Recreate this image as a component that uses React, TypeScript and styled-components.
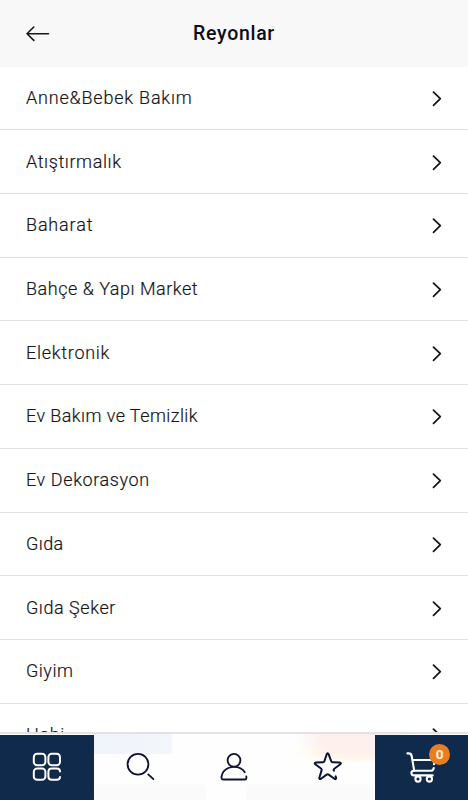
import React from "react";
import styled, { createGlobalStyle } from "styled-components";

const GlobalStyle = createGlobalStyle`
  * { box-sizing: border-box; }
  body { margin: 0; background: #fff; overflow: hidden; }
  svg { display: block; overflow: visible; }
`;

const Screen = styled.div`
  width: 468px;
  height: 800px;
  display: flex;
  flex-direction: column;
  overflow: hidden;
  background: #fff;
  font-family: Roboto, "Noto Sans", sans-serif;
  color: #17171b;
`;

const Header = styled.header`
  flex: none;
  height: 66.7px;
  padding: 1px 26px 0;
  display: grid;
  grid-template-columns: 24px 1fr 24px;
  align-items: center;
  background: #f8f8f8;
`;

const Title = styled.h1`
  margin: 0;
  text-align: center;
  font-size: 19.5px;
  line-height: 24px;
  font-weight: 500;
  letter-spacing: 0.7px;
  color: #0d0d18;
`;

const List = styled.ul`
  flex: 1;
  min-height: 0;
  margin: 0;
  padding: 0;
  list-style: none;
  overflow: hidden;
`;

const Row = styled.li`
  height: 63.7px;
  padding: 0 26px;
  display: flex;
  align-items: center;
  justify-content: space-between;
  border-bottom: 1px solid #e2e2e2;
`;

const Label = styled.span<{ $tracking: number }>`
  font-size: 18px;
  line-height: 24px;
  font-weight: 300;
  white-space: nowrap;
  letter-spacing: ${(p) => p.$tracking}px;
  -webkit-text-stroke: 0.2px currentColor;
`;

const TabBar = styled.nav`
  flex: none;
  height: 68px;
  display: grid;
  grid-template-columns: 94px 93px 94px 94px 93px;
  border-top: 2px solid #e3e3e5;
  padding-top: 1px;
  background:
    radial-gradient(ellipse 62px 24px at 358px 4px, #fdf0ed 0 60%, transparent 100%),
    radial-gradient(ellipse 66px 12px at 354px 18px, #fffae8 0 50%, transparent 100%),
    linear-gradient(90deg, #f0f4fb, #f3f7fb) 94px 0 / 78px 20px no-repeat,
    linear-gradient(transparent, #fafafa 40%) 94px 48px / 112px 18px no-repeat,
    linear-gradient(transparent, #fafafa 40%) 246px 48px / 128px 18px no-repeat,
    #fefefe;
`;

const Tab = styled.div<{ $filled?: boolean }>`
  display: flex;
  justify-content: center;
  padding-top: 17px;
  color: ${(p) => (p.$filled ? "#fff" : "#0c1234")};
  background: ${(p) => (p.$filled ? "#102a4c" : "transparent")};
`;

const CartBox = styled.div`
  position: relative;
  width: 32px;
  height: 32px;
`;

const Badge = styled.span`
  position: absolute;
  left: 23.5px;
  top: -8px;
  width: 21px;
  height: 21px;
  border-radius: 50%;
  background: #e97e20;
  color: #fff4d8;
  font-size: 13.5px;
  line-height: 21px;
  font-weight: 700;
  text-align: center;
`;

const stroke = {
  fill: "none",
  stroke: "currentColor",
  strokeLinecap: "round" as const,
  strokeLinejoin: "round" as const,
};

const BackIcon = () => (
  <svg width="24" height="16" viewBox="0 0 24 16" {...stroke} strokeWidth="1.6">
    <path d="M22.5 7.8H1M7.8 1 1 7.8l6.8 6.6" />
  </svg>
);

const Chevron = () => (
  <svg width="10" height="16" viewBox="0 0 10 16" {...stroke} strokeWidth="1.8">
    <path d="M1.5 2.1 8.3 8.7l-6.8 6.6" />
  </svg>
);

const GridIcon = () => (
  <svg width="28" height="28" viewBox="0 0 28 28" {...stroke} strokeWidth="2">
    <rect x="0.8" y="1.8" width="11.6" height="11.4" rx="3.4" />
    <rect x="15.4" y="1.8" width="11.6" height="11.4" rx="3.4" />
    <rect x="0.8" y="16.4" width="11.6" height="11.4" rx="3.4" />
    <path d="M27 19.4c0-2-1.2-3-3.2-3h-5c-2.1 0-3.4 1.3-3.4 3.4v4.6c0 2.1 1.3 3.4 3.4 3.4h5c2 0 3.2-1 3.2-2.7" />
  </svg>
);

const SearchIcon = () => (
  <svg width="28" height="28" viewBox="0 0 28 28" {...stroke} strokeWidth="1.8">
    <circle cx="11" cy="12.3" r="10.4" />
    <path d="m21.2 22.4 5.2 4.8" />
  </svg>
);

const UserIcon = () => (
  <svg width="28" height="28" viewBox="0 0 28 28" {...stroke} strokeWidth="1.8">
    <circle cx="14" cy="8.3" r="6.4" />
    <path d="M24.8 20.3C22.6 16.8 18.7 14.8 14 14.8c-7.4 0-12.5 5.2-12.5 11.2 0 1 .6 1.5 1.6 1.5h21.8c1.2 0 1.8-1 1.4-3" />
  </svg>
);

const StarIcon = () => (
  <svg width="28" height="28" viewBox="0 0 28 28" {...stroke} strokeWidth="2">
    <path d="M19.9 18.7c-.5-.7-.2-1.4.4-2l6-4.4c1-.8.6-1.8-.7-1.9l-6.9-.1c-.8 0-1.2-.4-1.5-1.1L14.6 2.2c-.5-1.2-1.5-1.2-1.9 0l-2.3 7c-.2.7-.7 1.1-1.5 1.1l-6.9.1c-1.3.1-1.7 1.1-.7 1.9L7 16.5c.7.5.8 1.1.6 1.9l-2.2 7.1c-.4 1.3.5 2 1.6 1.2l5.7-4.1c.7-.5 1.3-.5 2 0l5.7 4.2c1.1.8 2 .1 1.6-1.2l-.4-1.2" />
  </svg>
);

const CartIcon = () => (
  <svg width="30" height="32" viewBox="0 0 30 32" {...stroke} strokeWidth="2.1">
    <path d="M1.4 1.4h1.2c1.8 0 2.8.9 3.1 2.6l2.5 14.8M7 8h18.4" />
    <path d="M28 12.3v-.4M27.8 16c-.4 1.9-1.2 2.8-2.9 2.8H8c-1.7 0-2.6.8-2.6 2.2s.9 2.4 2.5 2.4h18.8" />
    <circle cx="12" cy="27" r="2.6" />
    <circle cx="23.4" cy="27" r="2.6" />
  </svg>
);

const departments = [
  { name: "Anne&Bebek Bakım", tracking: 0.8 },
  { name: "Atıştırmalık", tracking: 0.6 },
  { name: "Baharat", tracking: 0.84 },
  { name: "Bahçe & Yapı Market", tracking: 0.52 },
  { name: "Elektronik", tracking: 0.72 },
  { name: "Ev Bakım ve Temizlik", tracking: 0.42 },
  { name: "Ev Dekorasyon", tracking: 0.6 },
  { name: "Gıda", tracking: 0.4 },
  { name: "Gıda Şeker", tracking: 0.55 },
  { name: "Giyim", tracking: 0.5 },
  { name: "Hobi", tracking: 0.5 },
];

export default function App() {
  return (
    <Screen>
      <GlobalStyle />
      <Header>
        <BackIcon />
        <Title>Reyonlar</Title>
      </Header>
      <List>
        {departments.map((d) => (
          <Row key={d.name}>
            <Label $tracking={d.tracking}>{d.name}</Label>
            <Chevron />
          </Row>
        ))}
      </List>
      <TabBar>
        <Tab $filled><GridIcon /></Tab>
        <Tab><SearchIcon /></Tab>
        <Tab><UserIcon /></Tab>
        <Tab><StarIcon /></Tab>
        <Tab $filled>
          <CartBox>
            <CartIcon />
            <Badge>0</Badge>
          </CartBox>
        </Tab>
      </TabBar>
    </Screen>
  );
}
